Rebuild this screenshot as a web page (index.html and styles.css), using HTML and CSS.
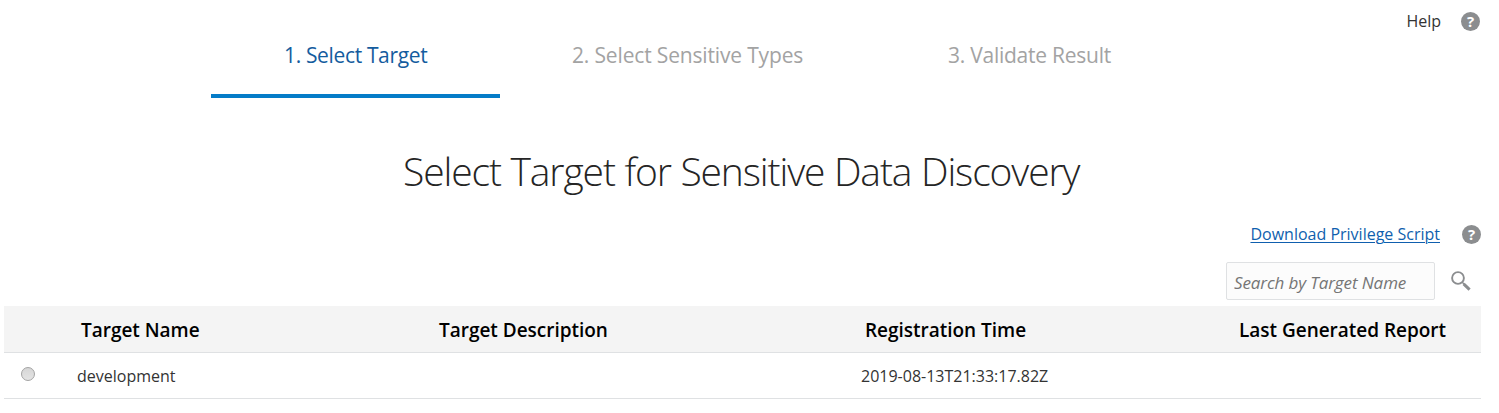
FILE: index.html
```
<!DOCTYPE html>
<html lang="en">
<head>
<meta charset="utf-8">
<title>Sensitive Data Discovery</title>
<link rel="stylesheet" href="styles.css">
</head>
<body>
<header class="top">
  <nav class="steps">
    <div class="step active"><span>1. Select Target</span></div>
    <div class="step types"><span>2. Select Sensitive Types</span></div>
    <div class="step result"><span>3. Validate Result</span></div>
  </nav>
  <div class="help"><span class="help-label">Help</span><span class="q">?</span></div>
</header>
<h1 class="title">Select Target for Sensitive Data Discovery</h1>
<div class="download"><a href="#">Download Privilege Script</a><span class="q">?</span></div>
<div class="search">
  <input class="field" type="text" placeholder="Search by Target Name">
  <svg class="mag" viewBox="0 0 20 20"><circle cx="7" cy="7" r="5.9"/><path class="neck" d="M11 11L13 13"/><path class="handle" d="M12.6 12.8L18.6 18.6"/></svg>
</div>
<main class="table">
  <div class="row head"><span></span><span>Target Name</span><span>Target Description</span><span>Registration Time</span><span>Last Generated Report</span></div>
  <div class="row item"><i class="radio"></i><span>development</span><span></span><span>2019-08-13T21:33:17.82Z</span><span></span></div>
</main>
</body>
</html>
```
FILE: styles.css
```
*{box-sizing:border-box}
body{margin:0;height:413px;overflow:hidden;font:16px/22px "Open Sans",sans-serif;color:#333;background:#fff}
.top{display:flex;justify-content:space-between;height:98px;padding:0 19px 0 211px}
.steps{display:flex}
.step{width:289px;height:98px;padding-top:40px;display:flex;color:#a3a3a3;font-size:21px;line-height:30px;white-space:nowrap}
.active{padding-left:73px;color:#145c9e;border-bottom:4px solid #057cc8;letter-spacing:-.35px}
.types{width:376px;padding-left:72px;letter-spacing:-.16px}
.result{padding-left:72px;letter-spacing:-.25px}
.help{display:flex;align-items:center;height:22px;margin-top:10px}
.help-label{margin-right:20px}
.q{display:flex;align-items:center;justify-content:center;width:19px;height:19px;border-radius:50%;background:#8b8d8f;color:#fff;font-size:15px;font-weight:700;line-height:19px}
.title{margin:43px 0 0;padding-left:403px;height:60px;font-size:39px;font-weight:300;line-height:60px;letter-spacing:-1.1px;word-spacing:.5px;white-space:nowrap;color:#252525}
.download{display:flex;justify-content:flex-end;align-items:center;height:22px;margin-top:22px;padding-right:18px}
.download a{margin-right:22px;color:#0f5fae;text-underline-offset:2px;text-decoration-thickness:1px}
.search{display:flex;justify-content:flex-end;height:38px;margin-top:17px;padding-right:28px}
.field{width:209px;height:38px;padding:3px 7px 0;border:1px solid #dfe1e3;border-radius:2px;background:#fcfcfc;font:italic 17px "Open Sans",sans-serif;letter-spacing:-.1px}
.field::placeholder{color:#757575;opacity:1}
.mag{width:20px;height:20px;margin:9px 0 0 16px;fill:none;stroke:#8b8d8f}
.mag circle{stroke-width:1.9}
.neck{stroke-width:1.5}
.handle{stroke-width:3}
.table{margin:6px 18px 0 4px}
.row{display:grid;grid-template-columns:73px 358px 426px 374px 1fr;align-items:center;height:47px;border-bottom:1px solid #dfe1e3;white-space:nowrap}
.head{background:#f4f4f4;color:#000;font-size:19px;font-weight:600;letter-spacing:-.02px;padding-left:4px;padding-top:1px}
.item{height:46px}
.radio{width:14px;height:14px;margin:-4px 0 0 17px;border:1px solid #a3a3a3;border-radius:50%;background:linear-gradient(#d6d6d6,#e4e4e4)}
```
